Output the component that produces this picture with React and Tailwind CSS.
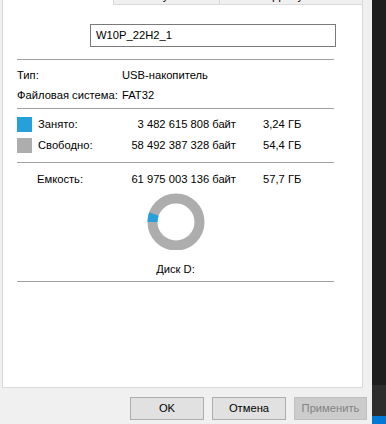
export default function App() {
  const font = { fontFamily: '"Liberation Sans", Arial, sans-serif' };
  const cx = 30, cy = 30, R = 28.5, r = 18.5;
  const a1 = Math.PI;
  const a2 = (160 * Math.PI) / 180;
  const p = (rad, a) => [cx + rad * Math.cos(a), cy - rad * Math.sin(a)];
  const [o1x, o1y] = p(R, a1);
  const [o2x, o2y] = p(R, a2);
  const [i2x, i2y] = p(r, a2);
  const [i1x, i1y] = p(r, a1);
  const d = `M ${o1x} ${o1y} A ${R} ${R} 0 0 1 ${o2x} ${o2y} L ${i2x} ${i2y} A ${r} ${r} 0 0 0 ${i1x} ${i1y} Z`;

  return (
    <div className="flex w-[386px] h-[424px] overflow-hidden text-[11.2px] text-black whitespace-nowrap" style={font}>
      <div className="flex flex-col w-[372px] h-full bg-[#f0f0f0]">
        <div className="ml-[2px] w-[361px] h-[388px] bg-white border-l border-r border-b border-[#d9d9d9] flex flex-col pl-[14px] pr-[28px]">
          <div className="flex h-[5px] ml-[96px] -mr-[28px] overflow-hidden">
            <div className="w-[106px] h-[5px] bg-[#f0f0f0] border-l border-b border-[#d9d9d9] overflow-hidden flex justify-center">
              <span className="-mt-[10px] leading-[12px] h-[12px]">ReadyBoost</span>
            </div>
            <div className="flex-1 h-[5px] bg-[#f0f0f0] border-l border-b border-[#d9d9d9] overflow-hidden flex justify-center">
              <span className="-mt-[10px] leading-[12px] h-[12px]">Доступ</span>
            </div>
          </div>
          <div className="mt-[19px] ml-[73px] w-[246px] h-[23px] border border-[#7a7a7a] flex items-center pl-[5px]">
            W10P_22H2_1
          </div>
          <div className="mt-[12px] h-px bg-[#a0a0a0]" />
          <div className="mt-[5px] h-[20px] flex items-center">
            <span className="w-[105px]">Тип:</span>
            <span>USB-накопитель</span>
          </div>
          <div className="h-[20px] flex items-center">
            <span className="w-[105px]">Файловая система:</span>
            <span>FAT32</span>
          </div>
          <div className="mt-[3px] h-px bg-[#a0a0a0]" />
          <div className="mt-[5px] h-[20px] flex items-center">
            <span className="w-[15px] h-[15px] bg-[#26a0da]" />
            <span className="ml-[6px] w-[90px]">Занято:</span>
            <span className="w-[108px] text-right">3 482 615 808 байт</span>
            <span className="ml-[27px]">3,24 ГБ</span>
          </div>
          <div className="mt-px h-[20px] flex items-center">
            <span className="w-[15px] h-[15px] bg-[#adadad]" />
            <span className="ml-[6px] w-[90px]">Свободно:</span>
            <span className="w-[108px] text-right">58 492 387 328 байт</span>
            <span className="ml-[27px]">54,4 ГБ</span>
          </div>
          <div className="mt-[7px] h-px bg-[#a0a0a0]" />
          <div className="mt-[6px] h-[20px] flex items-center">
            <span className="ml-[20px] w-[91px]">Емкость:</span>
            <span className="w-[108px] text-right">61 975 003 136 байт</span>
            <span className="ml-[27px]">57,7 ГБ</span>
          </div>
          <div className="mt-[4px] flex justify-center">
            <svg width="60" height="58" viewBox="0 0 60 58" className="-mt-px">
              <circle cx={cx} cy={cy} r={(R + r) / 2} fill="none" stroke="#adadad" strokeWidth={R - r} />
              <path d={d} fill="#26a0da" />
            </svg>
          </div>
          <div className="mt-[9px] h-[20px] flex items-center justify-center">Диск D:</div>
          <div className="mt-[2px] h-px bg-[#a0a0a0]" />
        </div>
        <div className="mt-[9px] flex gap-[8px] ml-[130px]">
          <div className="w-[74px] h-[23px] bg-[#e1e1e1] border border-[#adadad] flex items-center justify-center">OK</div>
          <div className="w-[74px] h-[23px] bg-[#e1e1e1] border border-[#adadad] flex items-center justify-center">Отмена</div>
          <div className="w-[73px] h-[23px] bg-[#cccccc] border border-[#bfbfbf] text-[#838383] flex items-center justify-center">Применить</div>
        </div>
      </div>
      <div className="flex flex-col w-[14px] h-full">
        <div className="h-[385px] bg-[#1e1e1e]" />
        <div className="h-[31px] bg-[#2d2d2d]" />
        <div className="flex-1 bg-[#0078d7]" />
      </div>
    </div>
  );
}
